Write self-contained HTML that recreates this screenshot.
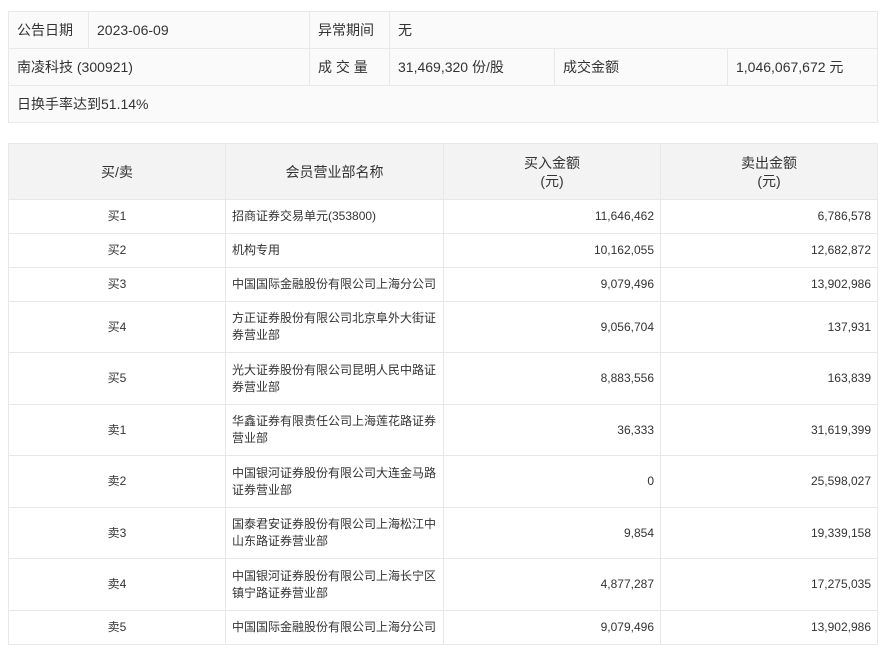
<!DOCTYPE html>
<html><head><meta charset="utf-8"><style>
body{margin:0;background:#fff;font-family:"Liberation Sans","Noto Sans CJK SC",sans-serif;font-size:12px;color:#333;}
table{border-collapse:collapse;position:absolute;left:8px;table-layout:fixed;}
td{border:1px solid #e8e8e8;padding:0 6px;white-space:nowrap;}
#t1{top:11px;width:869px;background:#fafafa;font-size:14px;}
#t1 td{height:36px;padding:0 8px;}
#t2{top:143px;width:869px;}
#t2 th{background:#f3f3f3;font-weight:normal;border:1px solid #e8e8e8;height:55px;font-size:14px;line-height:18px;padding:0;}
#t2 td{line-height:17px;}
.c{text-align:center}.r{text-align:right}
</style></head><body>
<table id="t1">
<colgroup><col style="width:80px"><col style="width:221px"><col style="width:80px"><col style="width:165px"><col style="width:173px"><col style="width:150px"></colgroup>
<tr><td>公告日期</td><td>2023-06-09</td><td>异常期间</td><td colspan="3">无</td></tr>
<tr><td colspan="2">南凌科技 (300921)</td><td>成 交 量</td><td>31,469,320 份/股</td><td>成交金额</td><td>1,046,067,672 元</td></tr>
<tr><td colspan="6">日换手率达到51.14%</td></tr>
</table>
<table id="t2">
<colgroup><col style="width:217px"><col style="width:218px"><col style="width:217px"><col style="width:217px"></colgroup>
<tr><th>买/卖</th><th>会员营业部名称</th><th>买入金额<br>(元)</th><th>卖出金额<br>(元)</th></tr>
<tr style="height:34px"><td class="c">买1</td><td>招商证券交易单元(353800)</td><td class="r">11,646,462</td><td class="r">6,786,578</td></tr>
<tr style="height:34px"><td class="c">买2</td><td>机构专用</td><td class="r">10,162,055</td><td class="r">12,682,872</td></tr>
<tr style="height:34px"><td class="c">买3</td><td>中国国际金融股份有限公司上海分公司</td><td class="r">9,079,496</td><td class="r">13,902,986</td></tr>
<tr style="height:51px"><td class="c">买4</td><td>方正证券股份有限公司北京阜外大街证<br>券营业部</td><td class="r">9,056,704</td><td class="r">137,931</td></tr>
<tr style="height:52px"><td class="c">买5</td><td>光大证券股份有限公司昆明人民中路证<br>券营业部</td><td class="r">8,883,556</td><td class="r">163,839</td></tr>
<tr style="height:51px"><td class="c">卖1</td><td>华鑫证券有限责任公司上海莲花路证券<br>营业部</td><td class="r">36,333</td><td class="r">31,619,399</td></tr>
<tr style="height:52px"><td class="c">卖2</td><td>中国银河证券股份有限公司大连金马路<br>证券营业部</td><td class="r">0</td><td class="r">25,598,027</td></tr>
<tr style="height:51px"><td class="c">卖3</td><td>国泰君安证券股份有限公司上海松江中<br>山东路证券营业部</td><td class="r">9,854</td><td class="r">19,339,158</td></tr>
<tr style="height:52px"><td class="c">卖4</td><td>中国银河证券股份有限公司上海长宁区<br>镇宁路证券营业部</td><td class="r">4,877,287</td><td class="r">17,275,035</td></tr>
<tr style="height:34px"><td class="c">卖5</td><td>中国国际金融股份有限公司上海分公司</td><td class="r">9,079,496</td><td class="r">13,902,986</td></tr>
</table>
</body></html>
